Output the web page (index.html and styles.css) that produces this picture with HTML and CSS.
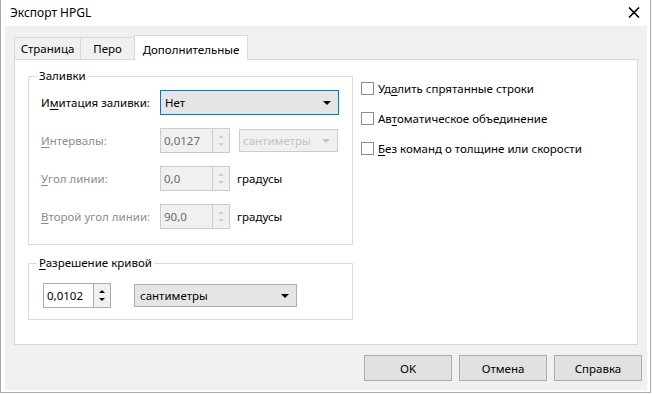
FILE: index.html
```html
<!DOCTYPE html>
<html lang="ru">
<head>
    <meta charset="UTF-8">
    <title>Экспорт HPGL</title>
    <link rel="stylesheet" href="styles.css">
</head>
<body>
    <div class="window">
        <div class="titlebar">
            <span class="title">Экспорт HPGL</span>
            <svg class="close" width="12" height="11" viewBox="0 0 12 11">
                <path d="M1 0.5 L11 10.5 M11 0.5 L1 10.5" stroke="#000" stroke-width="1.6" fill="none"/>
            </svg>
        </div>
        <div class="frame">
            <div class="client">
                <div class="tabs">
                    <div class="tab tab-page">Страница</div>
                    <div class="tab tab-pen">Перо</div>
                    <div class="tab tab-extra active">Дополнительные</div>
                </div>

                <div class="panel">
                    <div class="col-left">
                        <fieldset class="group group-fill">
                            <legend>Заливки</legend>
                            <div class="fill-rows">
                                <div class="row">
                                    <span class="label">И<u>м</u>итация заливки:</span>
                                    <div class="combo focused">
                                        <span>Нет</span>
                                        <span class="drop"></span>
                                    </div>
                                </div>
                                <div class="row">
                                    <span class="label disabled"><u>И</u>нтервалы:</span>
                                    <div class="spin disabled">
                                        <span class="spin-value">0,0127</span>
                                        <span class="spin-btns"><i class="up"></i><i class="down"></i></span>
                                    </div>
                                    <div class="combo small disabled">
                                        <span>сантиметры</span>
                                        <span class="drop"></span>
                                    </div>
                                </div>
                                <div class="row">
                                    <span class="label disabled"><u>У</u>гол линии:</span>
                                    <div class="spin disabled">
                                        <span class="spin-value">0,0</span>
                                        <span class="spin-btns"><i class="up"></i><i class="down"></i></span>
                                    </div>
                                    <span class="unit">градусы</span>
                                </div>
                                <div class="row">
                                    <span class="label disabled"><u>В</u>торой угол линии:</span>
                                    <div class="spin disabled">
                                        <span class="spin-value">90,0</span>
                                        <span class="spin-btns"><i class="up"></i><i class="down"></i></span>
                                    </div>
                                    <span class="unit">градусы</span>
                                </div>
                            </div>
                        </fieldset>

                        <fieldset class="group group-curve">
                            <legend><u>Р</u>азрешение кривой</legend>
                            <div class="curve-row">
                                <div class="spin short">
                                    <span class="spin-value">0,0102</span>
                                    <span class="spin-btns"><i class="up"></i><i class="down"></i></span>
                                </div>
                                <div class="combo units">
                                    <span>сантиметры</span>
                                    <span class="drop"></span>
                                </div>
                            </div>
                        </fieldset>
                    </div>

                    <div class="col-right">
                        <label class="check"><span class="box"></span><span>Уд<u>а</u>лить спрятанные строки</span></label>
                        <label class="check"><span class="box"></span><span>Ав<u>т</u>оматическое объединение</span></label>
                        <label class="check"><span class="box"></span><span><u>Б</u>ез команд о толщине или скорости</span></label>
                    </div>
                </div>

                <div class="buttons">
                    <button class="button">OK</button>
                    <button class="button">Отмена</button>
                    <button class="button">Справка</button>
                </div>
            </div>
        </div>
    </div>
</body>
</html>
```

FILE: styles.css
```css
/* Basic Reset */
* {
    margin: 0;
    padding: 0;
    box-sizing: border-box;
}

body {
    background: #fff;
    font-family: 'Noto Sans', 'Liberation Sans', sans-serif;
    font-size: 11.5px;
    color: #000;
}

u {
    text-underline-offset: 2px;
}

.window {
    width: 651px;
    height: 393px;
    border: 1px solid #aaaaaa;
    border-top: none;
    display: flex;
    flex-direction: column;
}

.titlebar {
    height: 26px;
    flex-shrink: 0;
    display: flex;
    align-items: center;
    justify-content: space-between;
    padding: 0 10px 2px 9px;
    font-size: 12px;
}

.frame {
    flex: 1;
    padding: 0 3px 2px 4px;
}

.client {
    height: 100%;
    background-color: #f0f0f0;
    padding: 9px 0 0 9px;
    display: flex;
    flex-direction: column;
}

/* Tabs */
.tabs {
    display: flex;
    align-items: flex-end;
    height: 24px;
}

.tab {
    height: 22px;
    border: 1px solid #d9d9d9;
    border-bottom: none;
    background-color: #f0f0f0;
    display: flex;
    align-items: center;
    justify-content: center;
}

.tab + .tab {
    margin-left: -1px;
}

.tab-page { width: 67px; }
.tab-pen { width: 55px; }
.tab-extra { width: 114px; }

.tab.active {
    height: 25px;
    margin-bottom: -1px;
    background-color: #fff;
    position: relative;
    z-index: 1;
    padding-top: 2px;
}

.panel {
    width: 624px;
    height: 286px;
    border: 1px solid #d9d9d9;
    background-color: #fff;
    display: flex;
    gap: 8px;
    padding: 8px 0 0 13px;
}

/* Group boxes */
.group {
    width: 325px;
    border: 1px solid #dcdcdc;
    min-width: 0;
}

.group legend {
    margin-left: 8px;
    padding: 0 2px;
    line-height: 16px;
}

.fill-rows {
    display: flex;
    flex-direction: column;
    gap: 13px;
    padding: 6px 0 15px 12px;
}

.row {
    display: flex;
    align-items: center;
    height: 25px;
}

.label {
    width: 119px;
}

.disabled {
    color: #8d8d8d;
}

.unit {
    margin-left: 7px;
}

.group-curve {
    margin-top: 10px;
}

.curve-row {
    display: flex;
    align-items: center;
    padding: 12px 0 11px 14px;
}

/* Combo boxes */
.combo {
    width: 179px;
    height: 25px;
    background-color: #e5e5e5;
    border: 1px solid #adadad;
    display: flex;
    align-items: center;
    justify-content: space-between;
    padding: 0 7px 0 4px;
}

.combo.focused {
    border-color: #0078d7;
}

.drop {
    width: 0;
    height: 0;
    border-left: 4px solid transparent;
    border-right: 4px solid transparent;
    border-top: 4px solid #000;
}

.combo.small {
    width: 99px;
    height: 23px;
    margin-left: 9px;
    background-color: #f0f0f0;
    border-color: #cccccc;
    color: #c3c3c3;
    padding-left: 3px;
}

.combo.small .drop {
    border-top-color: #c3c3c3;
}

.combo.units {
    width: 163px;
    height: 23px;
    margin-left: 23px;
    padding-left: 5px;
}

/* Spin boxes */
.spin {
    width: 70px;
    height: 25px;
    border: 1px solid #adadad;
    background-color: #fff;
    display: flex;
}

.spin-value {
    flex: 1;
    display: flex;
    align-items: center;
    padding-left: 3px;
}

.spin-btns {
    width: 17px;
    border-left: 1px solid #adadad;
    background-color: #f0f0f0;
    display: flex;
    flex-direction: column;
    align-items: center;
    justify-content: space-around;
    padding: 3px 0;
}

.up, .down {
    width: 0;
    height: 0;
    border-left: 3px solid transparent;
    border-right: 3px solid transparent;
}

.up { border-bottom: 3px solid #000; }
.down { border-top: 3px solid #000; }

.spin.disabled {
    border-color: #cccccc;
    background-color: #f0f0f0;
    color: #6d6d6d;
}

.spin.disabled .spin-btns {
    border-left-color: #cccccc;
}

.spin.disabled .up { border-bottom-color: #cfcfcf; }
.spin.disabled .down { border-top-color: #cfcfcf; }

.spin.short {
    width: 68px;
}

/* Check boxes */
.col-right {
    display: flex;
    flex-direction: column;
    gap: 17px;
    padding-top: 14px;
}

.check {
    display: flex;
    align-items: center;
    gap: 4px;
    height: 13px;
}

.box {
    width: 13px;
    height: 13px;
    border: 1px solid #8c8c8c;
    background-color: #fff;
}

/* Buttons */
.buttons {
    display: flex;
    justify-content: flex-end;
    gap: 7px;
    margin-top: 10px;
    padding-right: 5px;
}

.button {
    width: 88px;
    height: 26px;
    background-color: #e1e1e1;
    border: 1px solid #adadad;
    font-family: inherit;
    font-size: 11.5px;
    color: #000;
}
```
